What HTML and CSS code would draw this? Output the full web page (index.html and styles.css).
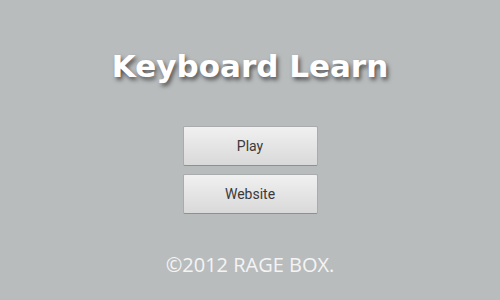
FILE: index.html
```html
<!DOCTYPE html>
<html lang="en">
<head>
    <meta charset="UTF-8">
    <title>Keyboard Learn</title>
    <link rel="stylesheet" href="styles.css">
</head>
<body>
    <div class="screen">
        <h1 class="title">Keyboard Learn</h1>
        <div class="menu">
            <button type="button" class="btn">Play</button>
            <button type="button" class="btn">Website</button>
        </div>
        <div class="footer">©2012 RAGE BOX.</div>
    </div>
</body>
</html>
```

FILE: styles.css
```css
/* General */
body {
    margin: 0;
    background: #b9bcbd;
    font-family: "Open Sans", "DejaVu Sans", sans-serif;
}

.screen {
    width: 500px;
    height: 300px;
    display: flex;
    flex-direction: column;
    align-items: center;
    box-sizing: border-box;
    padding-top: 44px;
}

.title {
    margin: 0;
    font-family: "DejaVu Sans", sans-serif;
    font-size: 31px;
    font-weight: bold;
    color: #ffffff;
    line-height: 44px;
    text-shadow: 2px 3px 4px rgba(0, 0, 0, 0.55);
}

.menu {
    display: flex;
    flex-direction: column;
    gap: 8px;
    margin-top: 38px;
}

.btn {
    width: 135px;
    height: 40px;
    font-family: Roboto, "Open Sans", sans-serif;
    font-size: 14px;
    color: #3a3a3a;
    background: linear-gradient(#f0f0f0, #d9d9d9);
    border: 1px solid #a9abac;
    border-bottom-color: #8d8f90;
    border-radius: 2px;
    padding: 0;
}

.footer {
    margin-top: 37px;
    font-size: 20px;
    color: #f4f4f4;
}
```
